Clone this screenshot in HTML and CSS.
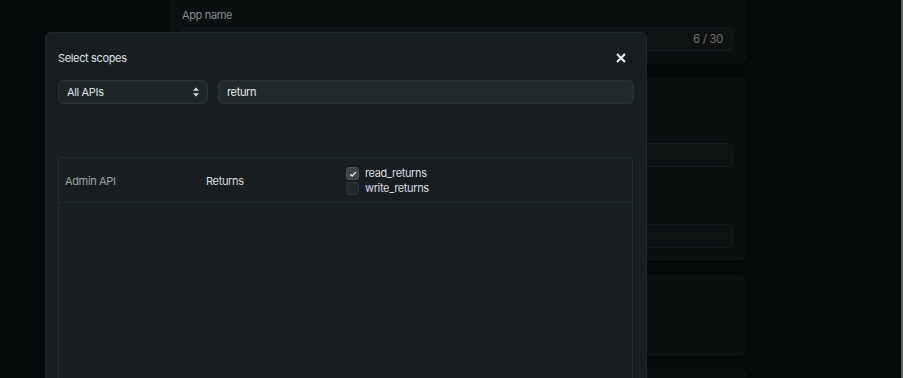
FILE: index.html
```html
<!DOCTYPE html>
<html>
<head>
<meta charset="utf-8">
<link rel="stylesheet" href="styles.css">
</head>
<body>
<div class="screen">
  <div class="page">
    <div class="column">
      <div class="card card-first">
        <div class="field-label">App name</div>
        <div class="bg-input"><span class="counter">6 / 30</span></div>
      </div>
      <div class="card card-second">
        <div class="bg-input input-a"></div>
        <div class="bg-input input-b"></div>
      </div>
      <div class="card card-third"></div>
      <div class="card card-fourth"></div>
    </div>
  </div>
  <div class="scrollbar"></div>

  <div class="modal">
    <div class="modal-header">
      <span class="modal-title">Select scopes</span>
      <svg class="close" width="10" height="10" viewBox="0 0 10 10"><path d="M1.8 1.8L8.2 8.2M8.2 1.8L1.8 8.2" stroke="#f2f4f5" stroke-width="2.1" stroke-linecap="square"/></svg>
    </div>
    <div class="filters">
      <div class="select">
        <span>All APIs</span>
        <svg width="8" height="10" viewBox="0 0 8 10"><path d="M4 0.5L7 3.8H1Z M4 9.5L7 6.2H1Z" fill="#d6dadc"/></svg>
      </div>
      <div class="search">return</div>
    </div>
    <div class="table">
      <div class="row">
        <div class="cell api">Admin API</div>
        <div class="cell resource">Returns</div>
        <div class="cell scopes">
          <label class="scope"><span class="box checked"><svg width="10" height="10" viewBox="0 0 10 10"><path d="M2.2 5.2L4.2 7.1L7.9 2.9" fill="none" stroke="#f2f4f5" stroke-width="1.3"/></svg></span>read_returns</label>
          <label class="scope"><span class="box"></span>write_returns</label>
        </div>
      </div>
    </div>
  </div>
</div>
</body>
</html>
```

FILE: styles.css
```css
html, body {
  margin: 0;
  padding: 0;
  background: #050909;
  overflow: hidden;
}
body {
  font-family: Inter, "Noto Sans", "Liberation Sans", sans-serif;
  letter-spacing: -0.35px;
}
.screen {
  position: relative;
  display: flex;
  width: 903px;
  height: 378px;
  overflow: hidden;
}
.page {
  flex: 1;
  padding-left: 169px;
}
.scrollbar {
  width: 2px;
  background: #5d6162;
}
.column {
  width: 577px;
  display: flex;
  flex-direction: column;
  gap: 14px;
}
.card {
  background: #0b0f10;
  border-radius: 6px;
  box-shadow: 0 1px 0 #030505;
  padding: 0 13px 13px;
}
.card-first {
  padding-top: 8px;
  border-radius: 0 0 6px 6px;
}
.field-label {
  font-size: 11px;
  line-height: 14px;
  color: #858a8d;
  margin-bottom: 5px;
}
.bg-input {
  height: 22px;
  border: 1px solid #161b1d;
  border-radius: 5px;
  background: #0e1213;
  display: flex;
  align-items: center;
  justify-content: flex-end;
  padding-right: 9px;
}
.counter {
  font-size: 11.5px;
  color: #756f66;
}
.card-second {
  height: 170px;
  display: flex;
  flex-direction: column;
}
.input-a { margin-top: 65px; }
.input-b { margin-top: 57px; }
.card-third { height: 68px; }
.card-fourth { height: 40px; margin-top: -2px; }

.modal {
  position: absolute;
  left: 45px;
  top: 32px;
  width: 576px;
  height: 400px;
  background: #181e20;
  border: 1px solid #1c2a2e;
  border-radius: 6px;
  padding: 0 12px;
}
.modal-header {
  display: flex;
  justify-content: space-between;
  align-items: center;
  padding-top: 18px;
  height: 14px;
  padding-right: 8px;
}
.modal-title {
  font-size: 11px;
  line-height: 14px;
  color: #dce0e2;
}
.filters {
  display: flex;
  gap: 10px;
  margin-top: 15px;
  height: 24px;
}
.select {
  width: 133px;
  border: 1px solid #2a3235;
  border-radius: 5px;
  background: #1e2527;
  display: flex;
  align-items: center;
  justify-content: space-between;
  padding: 0 7px 0 8px;
  font-size: 11px;
  color: #dfe3e5;
}
.search {
  flex: 1;
  border: 1px solid #2b3336;
  border-radius: 5px;
  background: #222a2c;
  display: flex;
  align-items: center;
  padding-left: 8px;
  font-size: 11px;
  color: #e2e6e8;
}
.table {
  margin-top: 53px;
  width: 573px;
  height: 260px;
  border: 1px solid #1d2e2f;
  border-radius: 3px;
}
.row {
  display: grid;
  grid-template-columns: 141px 140px 1fr;
  padding: 8px 0 6px 6px;
  border-bottom: 1px solid #1c2b2c;
  align-items: center;
}
.cell {
  font-size: 11px;
  line-height: 15px;
}
.api { color: #9ca1a4; }
.resource { color: #d7dbdd; }
.scopes {
  display: flex;
  flex-direction: column;
}
.scope {
  display: flex;
  align-items: center;
  gap: 6px;
  font-size: 11px;
  line-height: 15px;
  color: #d9dde0;
}
.box {
  width: 11px;
  height: 11px;
  border: 1px solid #2d3538;
  border-radius: 3px;
  background: #222a2c;
  display: flex;
  align-items: center;
  justify-content: center;
}
.box.checked {
  background: #3c4447;
  border-color: #4a5356;
}
```
